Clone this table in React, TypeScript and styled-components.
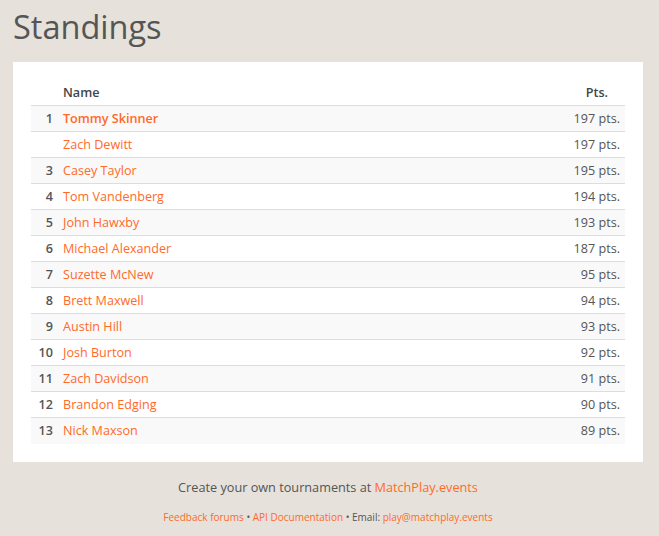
import styled, { createGlobalStyle } from "styled-components";

const GlobalStyle = createGlobalStyle`
  body {
    margin: 0;
    background: #e6e1db;
    font-family: "Open Sans", "Liberation Sans", sans-serif;
    color: #555;
  }
`;

const Page = styled.div`
  padding: 6px 16px 0 13px;
`;

const Title = styled.h1`
  margin: 0 0 14px 0;
  font-size: 32.5px;
  font-weight: 400;
  color: #555;
  line-height: 42px;
`;

const Card = styled.div`
  background: white;
  padding: 18px;
`;

const Table = styled.table`
  width: 100%;
  border-collapse: collapse;
  table-layout: fixed;
  font-size: 12.6px;
`;

const Th = styled.th<{ $right?: boolean; $w?: number }>`
  text-align: ${(p) => (p.$right ? "right" : "left")};
  width: ${(p) => (p.$w ? `${p.$w}px` : "auto")};
  font-weight: 600;
  color: #444;
  height: 24px;
  padding: 0 ${(p) => (p.$right ? "17px" : "5px")} 1px 5px;
  border-bottom: 1px solid #ddd;
  vertical-align: middle;
`;

const Row = styled.tr<{ $odd: boolean }>`
  background: ${(p) => (p.$odd ? "#f9f9f9" : "white")};
  border-top: 1px solid #ddd;
  height: 26px;

  td {
    padding: 0 5px 1px 5px;
  }
`;

const Rank = styled.td`
  text-align: right;
  font-weight: 600;
  color: #555;
`;

const NameCell = styled.td<{ $bold?: boolean }>`
  color: #ff6a2a;
  font-weight: ${(p) => (p.$bold ? 600 : 400)};
`;

const Points = styled.td`
  text-align: right;
  color: #555;
`;

const Footer = styled.div`
  text-align: center;
  padding-top: 16px;
`;

const Promo = styled.div`
  font-size: 12.7px;
  color: #555;
`;

const Links = styled.div`
  font-size: 10px;
  margin-top: 14px;
  color: #555;
`;

const Link = styled.a`
  color: #ff6a2a;
  text-decoration: none;
`;

const players: [string, string, number][] = [
  ["1", "Tommy Skinner", 197],
  ["", "Zach Dewitt", 197],
  ["3", "Casey Taylor", 195],
  ["4", "Tom Vandenberg", 194],
  ["5", "John Hawxby", 193],
  ["6", "Michael Alexander", 187],
  ["7", "Suzette McNew", 95],
  ["8", "Brett Maxwell", 94],
  ["9", "Austin Hill", 93],
  ["10", "Josh Burton", 92],
  ["11", "Zach Davidson", 91],
  ["12", "Brandon Edging", 90],
  ["13", "Nick Maxson", 89],
];

function App() {
  return (
    <Page>
      <GlobalStyle />
      <Title>Standings</Title>
      <Card>
        <Table>
          <thead>
            <tr>
              <Th $w={17}></Th>
              <Th>Name</Th>
              <Th $right $w={120}>Pts.</Th>
            </tr>
          </thead>
          <tbody>
            {players.map(([rank, name, pts], i) => (
              <Row key={name} $odd={i % 2 === 0}>
                <Rank>{rank}</Rank>
                <NameCell $bold={i === 0}>{name}</NameCell>
                <Points>{pts} pts.</Points>
              </Row>
            ))}
          </tbody>
        </Table>
      </Card>
      <Footer>
        <Promo>
          Create your own tournaments at <Link href="#">MatchPlay.events</Link>
        </Promo>
        <Links>
          <Link href="#">Feedback forums</Link> • <Link href="#">API Documentation</Link> •
          Email: <Link href="#">play@matchplay.events</Link>
        </Links>
      </Footer>
    </Page>
  );
}

export default App;
